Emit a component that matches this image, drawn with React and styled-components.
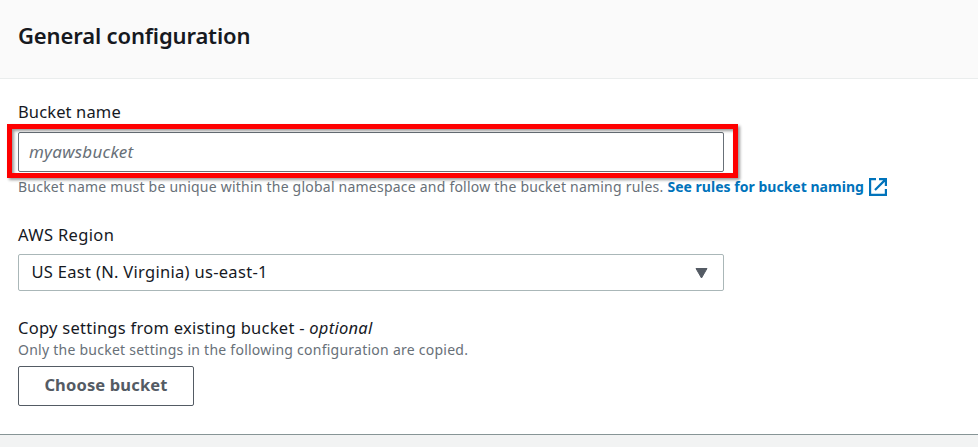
import React from "react";
import styled, { createGlobalStyle } from "styled-components";

const GlobalStyle = createGlobalStyle`
  * { box-sizing: border-box; }
  body {
    margin: 0;
    background: #f2f3f3;
    color: #16191f;
    font-family: "Noto Sans", "Open Sans", sans-serif;
    overflow: hidden;
  }
`;

const Panel = styled.section`
  height: 435px;
  background: #fff;
  border-bottom: 1px solid #879596;
  box-shadow: 0 1px 0 #b9c1c2;
`;

const Header = styled.header`
  height: 79px;
  padding: 20px 18px 0;
  background: #fafafa;
  border-bottom: 1px solid #eaeded;
`;

const Title = styled.h2`
  margin: 0;
  font-size: 22px;
  line-height: 30px;
  font-weight: 600;
  letter-spacing: -0.14px;
  white-space: nowrap;
`;

const Body = styled.div`
  display: flex;
  flex-direction: column;
  align-items: flex-start;
  padding: 21px 18px 0;
`;

const Field = styled.div`
  display: flex;
  flex-direction: column;
  align-items: flex-start;
  margin-bottom: ${(p) => p.$gap || 0}px;
`;

const Label = styled.label`
  font-size: 16.5px;
  line-height: 24px;
  letter-spacing: ${(p) => p.$track || "0"};
  white-space: nowrap;
`;

const InputWrap = styled.div`
  position: relative;
  margin-top: 8px;
`;

const Input = styled.input`
  display: block;
  width: 706px;
  height: 40px;
  padding: 0 10px 2px;
  border: 1px solid #687078;
  border-radius: 2px;
  background: #fff;
  font: inherit;
  font-size: 17px;
  outline: none;
  letter-spacing: 0.25px;
  &::placeholder {
    color: #687078;
    font-style: italic;
    opacity: 1;
  }
`;

const Highlight = styled.div`
  position: absolute;
  inset: -8px -14px -6px -11px;
  border: 5px solid #fe0000;
  filter: drop-shadow(2px 2px 1.5px rgba(0, 0, 0, 0.4));
  pointer-events: none;
`;

const Hint = styled.div`
  display: flex;
  align-items: center;
  height: 22px;
  margin-top: ${(p) => p.$top || 0}px;
  color: #687078;
  font-size: 14px;
  letter-spacing: ${(p) => p.$track || "0.235px"};
  white-space: nowrap;
`;

const Link = styled.a`
  display: flex;
  align-items: center;
  margin-left: 4px;
  color: #0073bb;
  font-weight: 700;
  letter-spacing: 0.02px;
  svg { margin: 2px 0 0 5px; }
`;

const Select = styled.div`
  display: flex;
  align-items: center;
  justify-content: space-between;
  width: 706px;
  height: 37px;
  margin-top: 7px;
  padding: 0 15.5px 2px 12.5px;
  border: 1px solid #aab7b8;
  border-radius: 2px;
  font-size: 16.5px;
  letter-spacing: 0.3px;
  svg { margin-top: 3px; }
`;

const Button = styled.button`
  width: 176px;
  height: 40px;
  margin-top: 6px;
  padding: 0 0 3px;
  border: 1px solid #545b64;
  border-radius: 2px;
  background: #fff;
  color: #545b64;
  font: inherit;
  font-size: 16.5px;
  font-weight: 700;
  letter-spacing: 0.15px;
`;

const ExternalIcon = () => (
  <svg width="18" height="18" viewBox="0 0 18 18" fill="none" stroke="#0073bb" strokeWidth="2.2">
    <path d="M7 1.1H1.1v15.8h15.8V11M10 1.1h6.9V8M16.9 1.1L6 12" />
  </svg>
);

const Caret = () => (
  <svg width="13" height="11" viewBox="0 0 13 11">
    <path d="M1 .5h11L6.5 10z" fill="#545b64" stroke="#545b64" strokeLinejoin="round" />
  </svg>
);

export default function App() {
  return (
    <>
      <GlobalStyle />
      <Panel>
        <Header>
          <Title>General configuration</Title>
        </Header>
        <Body>
          <Field $gap={26}>
            <Label $track="0.13px">Bucket name</Label>
            <InputWrap>
              <Input placeholder="myawsbucket" />
              <Highlight />
            </InputWrap>
            <Hint $top={3} $track="0.223px">
              Bucket name must be unique within the global namespace and follow the bucket naming rules.
              <Link>
                See rules for bucket naming
                <ExternalIcon />
              </Link>
            </Hint>
          </Field>
          <Field $gap={25}>
            <Label $track="0.35px">AWS Region</Label>
            <Select>
              US East (N. Virginia) us-east-1
              <Caret />
            </Select>
          </Field>
          <Field>
            <Label $track="0.26px">
              Copy settings from existing bucket - <em>optional</em>
            </Label>
            <Hint $top={-2} $track="0.25px">
              Only the bucket settings in the following configuration are copied.
            </Hint>
            <Button>Choose bucket</Button>
          </Field>
        </Body>
      </Panel>
    </>
  );
}
